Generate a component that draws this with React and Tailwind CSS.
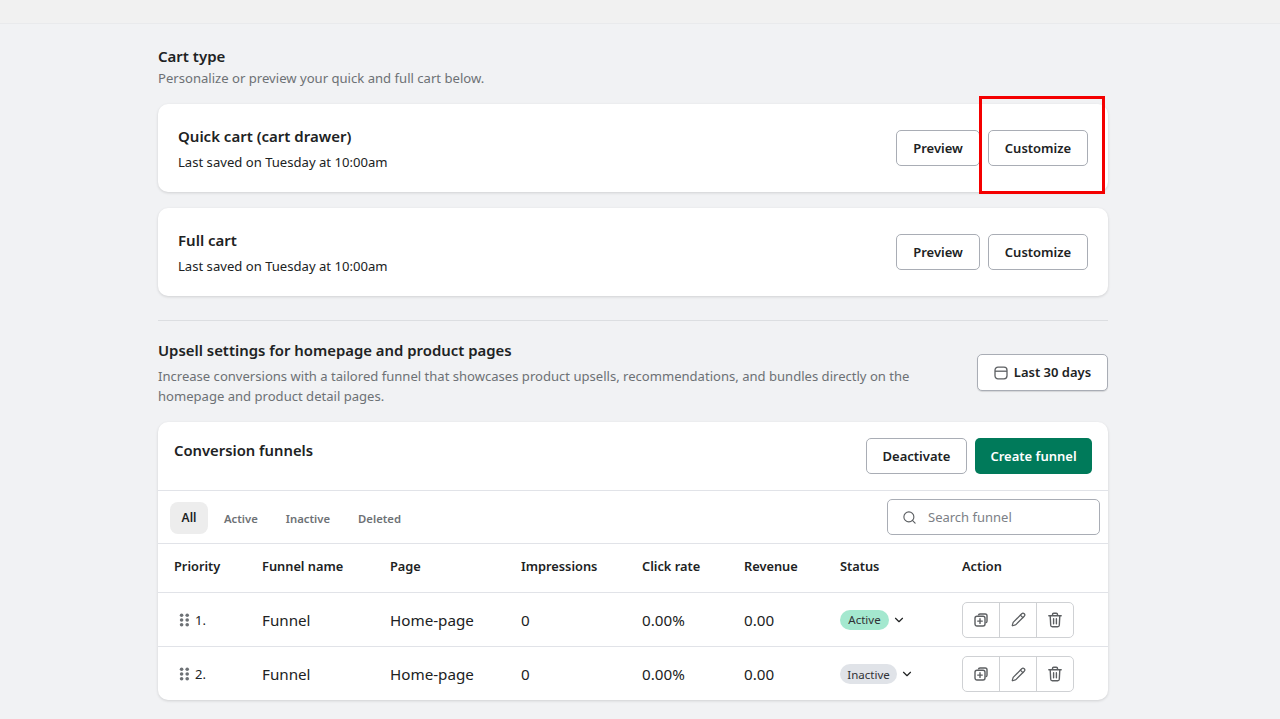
import React from "react";
import { ChevronDown, Pencil, Search } from "lucide-react";

const FONT = "font-['Noto_Sans','Open_Sans',sans-serif]";

const OutlineButton = ({ children, className = "" }) => (
  <button
    className={`h-9 rounded-[5px] border border-[#a9adb5] bg-white text-[13px] font-semibold text-[#202223] ${className}`}
  >
    {children}
  </button>
);

const CartCard = ({ title }) => (
  <div className="flex h-[88px] items-center justify-between rounded-[10px] bg-white pl-5 pr-5 shadow-[0_1px_3px_rgba(0,0,0,0.14)]">
    <div className="pt-[2px]">
      <div className="text-[15px] leading-5 font-semibold text-[#202223]">{title}</div>
      <div className="mt-[6px] text-[13.1px] leading-5 text-[#202223]">Last saved on Tuesday at 10:00am</div>
    </div>
    <div className="flex gap-2">
      <OutlineButton className="w-[84px] pt-[2px]">Preview</OutlineButton>
      <OutlineButton className="w-[100px] pt-[2px]">Customize</OutlineButton>
    </div>
  </div>
);

const GripIcon = () => (
  <svg width="11" height="14" viewBox="0 0 11 14" fill="#6d7175">
    <circle cx="2.6" cy="2.2" r="1.8" />
    <circle cx="8.2" cy="2.2" r="1.8" />
    <circle cx="2.6" cy="7" r="1.8" />
    <circle cx="8.2" cy="7" r="1.8" />
    <circle cx="2.6" cy="11.8" r="1.8" />
    <circle cx="8.2" cy="11.8" r="1.8" />
  </svg>
);

const DuplicateIcon = () => (
  <svg width="14" height="14" viewBox="0 0 14 14" fill="none" stroke="#5c5f62" strokeWidth="1.4" strokeLinejoin="round">
    <path d="M4.4 2.4A1.7 1.7 0 0 1 6 1h5.2A1.8 1.8 0 0 1 13 2.8v5.4a1.7 1.7 0 0 1-1.4 1.6" />
    <rect x="1" y="3.2" width="10" height="9.8" rx="2" fill="white" />
    <path d="M6 5.8v4.6M3.7 8.1h4.6" strokeLinecap="round" />
  </svg>
);

const TrashIcon = () => (
  <svg width="16" height="16" viewBox="0 0 16 16" fill="none" stroke="#5c5f62" strokeWidth="1.4" strokeLinecap="round" strokeLinejoin="round">
    <path d="M1.8 3.8h12.4M5.5 3.6V2.4A1.2 1.2 0 0 1 6.7 1.2h2.6a1.2 1.2 0 0 1 1.2 1.2v1.2" />
    <path d="M3.2 4l.5 9.2a1.6 1.6 0 0 0 1.6 1.5h5.4a1.6 1.6 0 0 0 1.6-1.5l.5-9.2" />
    <path d="M6.6 6.8v5M9.4 6.8v5" />
  </svg>
);

const CalendarIcon = () => (
  <svg width="14" height="14" viewBox="0 0 14 14" fill="none" stroke="#5c5f62" strokeWidth="1.3">
    <rect x="1" y="1.2" width="12" height="11.6" rx="3" />
    <path d="M1 5.2h12" />
  </svg>
);

const rows = [
  { n: "1.", status: "Active", badge: "bg-[#a4e8cf] w-[49px]" },
  { n: "2.", status: "Inactive", badge: "bg-[#e0e3e8] w-[57px]" },
];

const columns = "grid grid-cols-[88px_128px_131px_121px_102px_96px_122px_1fr] items-center px-4";

export default function App() {
  return (
    <div className={`${FONT} h-[719px] overflow-hidden bg-[#f1f2f4]`}>
      <div className="h-6 border-b border-[#e9eaec] bg-[#f1f1f1]" />
      <div className="ml-[158px] w-[950px] pt-[22px]">
        <div className="text-[15px] leading-5 font-semibold text-[#202223]">Cart type</div>
        <div className="mt-[2px] text-[13.1px] leading-5 text-[#6d7175]">Personalize or preview your quick and full cart below.</div>

        <div className="relative mt-4">
          <CartCard title="Quick cart (cart drawer)" />
          <div className="absolute top-[-8px] left-[821px] h-[98px] w-[126px] border-[3px] border-[#f40000]" />
        </div>
        <div className="mt-4">
          <CartCard title="Full cart" />
        </div>

        <div className="mt-6 border-t border-[#dcdee1] pt-[19px]">
          <div className="flex justify-between">
            <div className="w-[790px]">
              <div className="text-[14.9px] leading-5 font-semibold text-[#202223]">Upsell settings for homepage and product pages</div>
              <div className="mt-[6px] text-[13.07px] leading-5 text-[#6d7175]">
                Increase conversions with a tailored funnel that showcases product upsells, recommendations, and bundles directly on the homepage and product detail pages.
              </div>
            </div>
            <OutlineButton className="mt-[14px] flex h-[37px] w-[131px] items-center justify-center gap-[6px] shadow-[0_1px_1px_rgba(0,0,0,0.12)]">
              <CalendarIcon />
              Last 30 days
            </OutlineButton>
          </div>
        </div>

        <div className="mt-4 h-[278px] overflow-hidden rounded-[10px] bg-white shadow-[0_1px_3px_rgba(0,0,0,0.14)]">
          <div className="flex h-[69px] justify-between border-b border-[#e1e3e8] px-4 pt-4">
            <div className="mt-[2px] text-[14.8px] leading-5 font-semibold text-[#202223]">Conversion funnels</div>
            <div className="flex h-9 gap-2">
              <OutlineButton className="w-[101px] pt-[2px]">Deactivate</OutlineButton>
              <button className="h-9 w-[117px] rounded-[5px] bg-[#007a5a] pt-[2px] text-[13px] font-semibold text-white">Create funnel</button>
            </div>
          </div>

          <div className="flex h-[53px] items-center justify-between border-b border-[#e1e3e8] pr-2 pl-3">
            <div className="mt-[2px] flex items-center text-[11.3px] font-semibold text-[#6d7175]">
              <span className="flex h-8 w-[38px] items-center justify-center rounded-lg bg-[#ededed] text-[12px] text-[#202223]">All</span>
              <span className="ml-4 pt-[2px]">Active</span>
              <span className="ml-7 pt-[2px]">Inactive</span>
              <span className="ml-7 pt-[2px]">Deleted</span>
            </div>
            <div className="flex h-9 w-[213px] items-center gap-[11px] rounded-[5px] border border-[#a9adb5] pl-[14px]">
              <Search size={15} color="#5c5f62" strokeWidth={1.8} />
              <span className="text-[13px] leading-5 text-[#7c8086]">Search funnel</span>
            </div>
          </div>

          <div className={`${columns} h-[49px] border-b border-[#e1e3e8] pb-[2px] text-[12.8px] font-semibold text-[#202223]`}>
            <span>Priority</span>
            <span>Funnel name</span>
            <span>Page</span>
            <span>Impressions</span>
            <span>Click rate</span>
            <span>Revenue</span>
            <span>Status</span>
            <span>Action</span>
          </div>

          {rows.map((row, i) => (
            <div
              key={row.n}
              className={`${columns} h-[54px] text-[15.2px] text-[#202223] ${i === 0 ? "border-b border-[#e1e3e8]" : ""}`}
            >
              <span className="flex items-center gap-[5px] pl-[5px] text-[13px]">
                <GripIcon />
                <span className="pt-[2px]">{row.n}</span>
              </span>
              <span className="pt-[1px]">Funnel</span>
              <span className="pt-[1px]">Home-page</span>
              <span className="pt-[1px]">0</span>
              <span className="pt-[1px]">0.00%</span>
              <span className="pt-[1px]">0.00</span>
              <span className="flex items-center gap-[3px]">
                <span className={`flex h-5 items-center justify-center rounded-full pt-[1px] text-[11.5px] text-[#303235] ${row.badge}`}>
                  {row.status}
                </span>
                <ChevronDown size={14} color="#202223" strokeWidth={2} />
              </span>
              <div className="flex h-9 w-28 items-stretch rounded-[5px] border border-[#cfd1d4]">
                <span className="flex flex-1 items-center justify-center border-r border-[#cfd1d4]"><DuplicateIcon /></span>
                <span className="flex flex-1 items-center justify-center border-r border-[#cfd1d4]"><Pencil size={15} color="#5c5f62" strokeWidth={2} /></span>
                <span className="flex flex-1 items-center justify-center"><TrashIcon /></span>
              </div>
            </div>
          ))}
        </div>
      </div>
    </div>
  );
}
